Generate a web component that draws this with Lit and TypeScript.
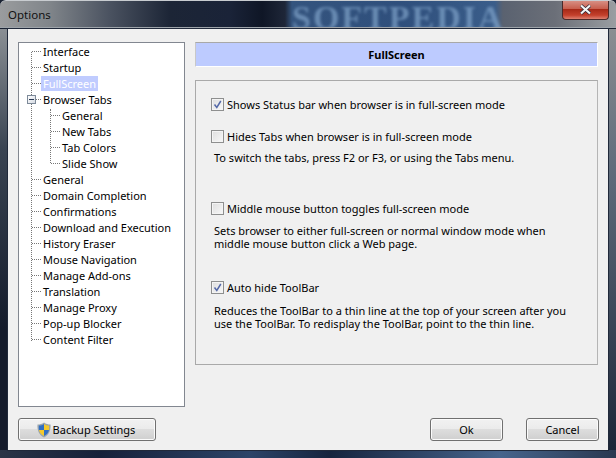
import { LitElement, html, css } from "lit";
import { customElement } from "lit/decorators.js";

const topItems: [string, number][] = [
  ["Interface", 0], ["Startup", 0], ["FullScreen", 0], ["Browser Tabs", 0],
  ["General", 1], ["New Tabs", 1], ["Tab Colors", 1], ["Slide Show", 1],
  ["General", 0], ["Domain Completion", 0], ["Confirmations", 0], ["Download and Execution", 0],
  ["History Eraser", 0], ["Mouse Navigation", 0], ["Manage Add-ons", 0], ["Translation", 0],
  ["Manage Proxy", 0], ["Pop-up Blocker", 0], ["Content Filter", 0],
];

@customElement("app-root")
export class AppRoot extends LitElement {
  static styles = css`
    :host { display: block; width: 616px; height: 458px; overflow: hidden; background: #1a2232; font-family: "Noto Sans", Tahoma, sans-serif; font-size: 11px; color: #000; }
    .win { width: 616px; height: 458px; box-sizing: border-box; display: flex; flex-direction: column; position: relative; }
    .bottom { position: absolute; left: 0; right: 0; bottom: 0; height: 8px; background: linear-gradient(90deg, #2a3446, #16213a 100px, #2c4468 250px, #16243e 330px, #46648c 500px, #2a3850); }
    .left { position: absolute; left: 0; top: 29px; bottom: 0; width: 8px; background: linear-gradient(180deg, #8a8f94, #3a4452 120px, #141b2b 300px); }
    .right { position: absolute; right: 0; top: 29px; bottom: 0; width: 8px; background: linear-gradient(180deg, #8a8e92, #5d6a7a 150px, #1a2436); }
    .title { height: 28px; flex: none; box-sizing: border-box; border-top: 1px solid #c8ccd0; border-bottom: 1px solid #9ea4aa; border-radius: 6px 6px 0 0; display: flex; align-items: center; padding: 1px 8px 0; position: relative; overflow: hidden; font-size: 11.5px; color: #111;
      background: linear-gradient(90deg, #9a9c9e 0, #80858a 50px, #4a5260 110px, #1c2536 170px, #1a2338 230px, #0f1626 262px, #1e2638 285px, #34547e 292px, #2f4f7c 400px, #3a5d8a 495px, #5a6270 503px, #6b6f78 555px, #9a9ea2 616px); }
    .wm { position: absolute; left: 292px; top: -2px; font-family: "Liberation Serif", serif; font-size: 34px; font-weight: 700; letter-spacing: 2px; color: #7fa2c8; opacity: .72; filter: blur(1.4px); white-space: nowrap; }
    .close { position: absolute; left: 562px; top: -1px; width: 47px; height: 20px; box-sizing: border-box; border: 1px solid #4a2a2a; border-top: 0; border-radius: 0 0 4px 4px; background: linear-gradient(180deg, #d9958a 0, #c8604f 45%, #a82a18 50%, #c4402c 80%, #dd8070 100%); display: flex; align-items: center; justify-content: center; }
    .client { position: relative; z-index: 1; margin: 0 7px; height: 423px; box-sizing: border-box; background: #f0f0f0; border: 1px solid #20293a; padding: 13px 10px 8px 10px; display: grid; grid-template-columns: 167px 403px; grid-template-rows: 365px 1fr; column-gap: 10px; row-gap: 11px; }
    .tree { border: 1px solid #828790; background: #fff; box-sizing: border-box; position: relative; }
    .vline { position: absolute; left: 12px; top: 9px; height: 289px; border-left: 1px dotted #777; }
    .sub { position: absolute; left: 31px; top: 66px; height: 54px; border-left: 1px dotted #777; }
    .row { height: 16px; display: flex; align-items: center; position: relative; padding-left: 24px; white-space: nowrap; }
    .row.l1 { padding-left: 43px; }
    .row::before { content: ""; position: absolute; left: 13px; width: 9px; top: 8px; border-top: 1px dotted #777; }
    .row.l1::before { left: 32px; width: 9px; }
    .label { padding: 0 2px; line-height: 15px; margin-left: -2px; }
    .sel .label { background: #c0ccff; color: #fff; }
    .exp { position: absolute; left: 8px; top: 4px; width: 9px; height: 9px; box-sizing: border-box; border: 1px solid #7d8a99; background: linear-gradient(135deg, #fff, #d5dae2); z-index: 1; }
    .exp::after { content: ""; position: absolute; left: 1px; right: 1px; top: 3px; border-top: 1px solid #2a3a55; }
    .panel { display: flex; flex-direction: column; }
    .head { height: 25px; box-sizing: border-box; background: #bdcbff; border-top: 1px solid #a8a8a8; border-left: 1px solid #c8c8c8; border-bottom: 1px solid #fff; border-right: 1px solid #fff; display: flex; align-items: center; justify-content: center; font-weight: 700; }
    .group { margin-top: 13px; height: 285px; box-sizing: border-box; border: 1px solid #a9a9a9; border-right-color: #b5b5b5; padding: 16px 15px 0; display: flex; flex-direction: column; }
    .check { display: flex; align-items: center; gap: 3px; height: 15px; }
    .box { width: 13px; height: 13px; box-sizing: border-box; border: 1px solid #8e8f8f; background: linear-gradient(135deg, #dedede, #f8f8f8); box-shadow: inset 0 0 0 1px #f4f4f4; flex: none; display: flex; align-items: center; justify-content: center; }
    .note { line-height: 13px; margin-left: 3px; }
    .n1 { margin-top: 7px; }
    .n2 { margin-top: 8px; }
    .n3 { margin-top: 9px; }
    .s1 { margin-top: 17px; }
    .s2 { margin-top: 37px; }
    .s3 { margin-top: 30px; }
    .foot { grid-column: 1 / 3; display: flex; align-items: flex-start; margin-right: -1px; }
    .btn { height: 23px; box-sizing: border-box; border: 1px solid #707070; border-radius: 3px; background: linear-gradient(180deg, #f2f2f2 0, #ebebeb 49%, #dddddd 50%, #cfcfcf 100%); box-shadow: inset 0 0 0 1px #fbfbfb; display: flex; align-items: center; justify-content: center; gap: 1px; font-family: inherit; font-size: 11px; padding: 0; color: #000; }
    .backup { width: 138px; padding-right: 3px; }
    .ok { width: 73px; margin-left: auto; }
    .cancel { width: 73px; margin-left: 23px; }
  `;

  check() {
    return html`<svg width="11" height="11" viewBox="0 0 11 11"><path d="M2.500 5.500 L4.800 8.500 L8.800 2" fill="none" stroke="#5468a8" stroke-width="1.500"/></svg>`;
  }

  render() {
    return html`<div class="win">
      <div class="title"><span>Options</span><span class="wm">SOFTPEDIA</span>
        <div class="close"><svg width="13" height="11" viewBox="0 0 13 11"><path d="M2 1.500 L11 9.500 M11 1.500 L2 9.500" stroke="#2a2a3a" stroke-width="3.600" /><path d="M2 1.500 L11 9.500 M11 1.500 L2 9.500" stroke="#f4f4f4" stroke-width="2.200" /></svg></div>
      </div>
      <div class="left"></div><div class="right"></div><div class="bottom"></div>
      <div class="client">
        <div class="tree">
          <div class="vline"></div><div class="sub"></div>
          ${topItems.map(([t, l], i) => html`<div class="row ${l ? "l1" : ""} ${i === 2 ? "sel" : ""}">
            ${i === 3 ? html`<span class="exp"></span>` : ""}<span class="label">${t}</span></div>`)}
        </div>
        <div class="panel">
          <div class="head">FullScreen</div>
          <div class="group">
            <label class="check"><span class="box">${this.check()}</span>Shows Status bar when browser is in full-screen mode</label>
            <label class="check s1"><span class="box"></span>Hides Tabs when browser is in full-screen mode</label>
            <div class="note n1">To switch the tabs, press F2 or F3, or using the Tabs menu.</div>
            <label class="check s2"><span class="box"></span>Middle mouse button toggles full-screen mode</label>
            <div class="note n2">Sets browser to either full-screen or normal window mode when<br>middle mouse button click a Web page.</div>
            <label class="check s3"><span class="box">${this.check()}</span>Auto hide ToolBar</label>
            <div class="note n3">Reduces the ToolBar to a thin line at the top of your screen after you<br>use the ToolBar. To redisplay the ToolBar, point to the thin line.</div>
          </div>
        </div>
        <div class="foot">
          <button class="btn backup"><svg width="16" height="16" viewBox="0 0 16 16"><path d="M8 .5 C10 2 12 2.500 14.500 2.500 C15 8 13 13 8 15.500 C3 13 1 8 1.500 2.500 C4 2.500 6 2 8 .5Z" fill="#9aa5ae" /><path d="M8 2 V8 H3 C2.800 6 2.800 4.500 3 3.500 C5 3.500 6.500 3 8 2Z" fill="#2f6fc4"/><path d="M8 2 C9.500 3 11 3.500 13 3.500 C13.200 5 13.200 6.500 13 8 H8Z" fill="#f4c92c"/><path d="M3 8 H8 V14 C5 12.500 3.500 10.500 3 8Z" fill="#f4c92c"/><path d="M8 8 H13 C12.500 10.500 11 12.500 8 14Z" fill="#2f6fc4"/></svg>Backup Settings</button>
          <button class="btn ok">Ok</button>
          <button class="btn cancel">Cancel</button>
        </div>
      </div>
    </div>`;
  }
}
